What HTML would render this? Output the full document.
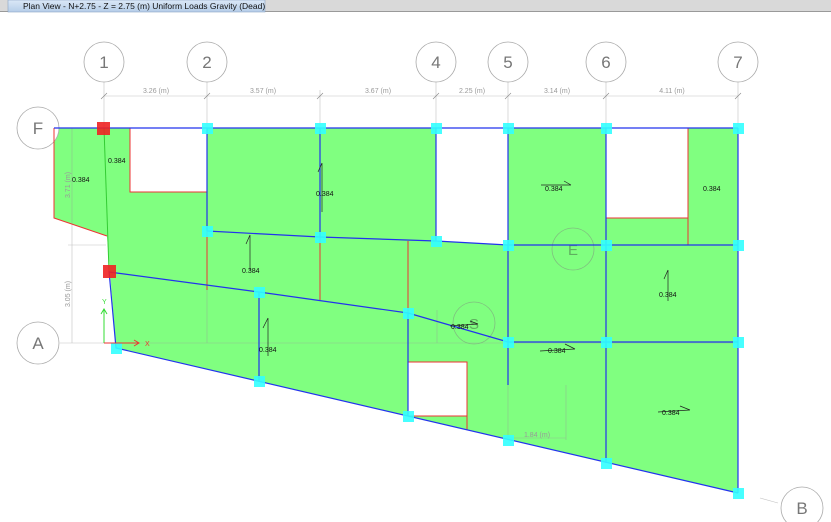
<!DOCTYPE html>
<html><head><style>
html,body{margin:0;padding:0;background:#fff;width:831px;height:522px;overflow:hidden}
svg{display:block}
text{font-family:"Liberation Sans",sans-serif}
</style></head><body>
<svg width="831" height="522" viewBox="0 0 831 522" xmlns="http://www.w3.org/2000/svg">
<defs><linearGradient id="tg" x1="0" y1="0" x2="0" y2="1"><stop offset="0" stop-color="#dbe8f7"/><stop offset="1" stop-color="#b5cde8"/></linearGradient></defs>
<rect x="0" y="0" width="831" height="11" fill="#d9d9d9"/>
<rect x="0" y="11" width="831" height="1" fill="#9a9a9a"/>
<rect x="8" y="0" width="257" height="12" fill="url(#tg)" stroke="#8aa4c4" stroke-width="0.6"/>
<text x="23" y="9" font-size="8.5" fill="#111">Plan View - N+2.75 - Z = 2.75 (m)  Uniform Loads Gravity  (Dead)</text>

<!-- green slab -->
<polygon points="54,128 738,128 738,493 116,348 110,272 107,236 54,218" fill="#80ff80"/>
<rect x="130" y="128" width="77" height="64" fill="#fff"/>
<polygon points="436,128 508,128 508,245 436,241" fill="#fff"/>
<rect x="606" y="128" width="82" height="90" fill="#fff"/>
<rect x="408" y="362" width="59" height="54" fill="#fff"/>

<!-- faint grid lines -->
<g stroke="#999" stroke-width="0.6" fill="none" opacity="0.6">
<line x1="104" y1="82" x2="104" y2="128"/>
<line x1="207" y1="82" x2="207" y2="128"/>
<line x1="320" y1="90" x2="320" y2="128"/>
<line x1="436" y1="82" x2="436" y2="128"/>
<line x1="508" y1="82" x2="508" y2="128"/>
<line x1="606" y1="82" x2="606" y2="128"/>
<line x1="738" y1="82" x2="738" y2="128"/>
<line x1="104" y1="96" x2="738" y2="96"/>
<line x1="72" y1="128" x2="72" y2="343"/>
<line x1="68" y1="245" x2="106" y2="245"/>
<line x1="60" y1="343" x2="738" y2="343"/>
<line x1="207" y1="290" x2="207" y2="343"/>
<line x1="437" y1="310" x2="437" y2="343"/>
<line x1="508" y1="385" x2="508" y2="438"/>
<line x1="566" y1="385" x2="566" y2="440"/>
<line x1="508" y1="438" x2="566" y2="438"/>
<line x1="760" y1="498" x2="778" y2="503"/>
</g>
<g stroke="#888" stroke-width="0.6">
<line x1="101" y1="99" x2="107" y2="93"/><line x1="204" y1="99" x2="210" y2="93"/><line x1="317" y1="99" x2="323" y2="93"/><line x1="433" y1="99" x2="439" y2="93"/><line x1="505" y1="99" x2="511" y2="93"/><line x1="603" y1="99" x2="609" y2="93"/><line x1="735" y1="99" x2="741" y2="93"/>
</g>
<g font-size="7" fill="#999" text-anchor="middle">
<text x="156" y="93">3.26 (m)</text><text x="263" y="93">3.57 (m)</text><text x="378" y="93">3.67 (m)</text><text x="472" y="93">2.25 (m)</text><text x="557" y="93">3.14 (m)</text><text x="672" y="93">4.11 (m)</text>
<text x="537" y="437">1.84 (m)</text>
<text transform="translate(70,185) rotate(-90)">3.71 (m)</text>
<text transform="translate(70,294) rotate(-90)">3.05 (m)</text>
</g>

<!-- grid bubbles -->
<g fill="#fff" stroke="#aaa" stroke-width="0.8">
<circle cx="104" cy="62" r="20"/><circle cx="207" cy="62" r="20"/><circle cx="436" cy="62" r="20"/><circle cx="508" cy="62" r="20"/><circle cx="606" cy="62" r="20"/><circle cx="738" cy="62" r="20"/>
<circle cx="38" cy="128" r="21"/><circle cx="38" cy="343" r="21"/><circle cx="802" cy="508" r="21"/>
</g>
<g fill="none" stroke="#7fbf7f" stroke-width="0.8"><circle cx="573" cy="249" r="21"/><circle cx="474" cy="323" r="21"/></g>
<g font-size="17" fill="#777" text-anchor="middle">
<text x="104" y="68">1</text><text x="207" y="68">2</text><text x="436" y="68">4</text><text x="508" y="68">5</text><text x="606" y="68">6</text><text x="738" y="68">7</text>
<text x="38" y="134">F</text><text x="38" y="349">A</text><text x="802" y="514">B</text>
</g>
<g font-size="15" fill="#5fae5f" text-anchor="middle"><text x="573" y="255">E</text><text x="474" y="329">S</text></g>

<!-- red edges -->
<g stroke="#ee3333" stroke-width="1" fill="none">
<polyline points="54,128 54,218 107,236"/>
<polyline points="130,128 130,192 207,192"/>
<line x1="207" y1="231" x2="207" y2="290"/>
<line x1="320" y1="237" x2="320" y2="300"/>
<line x1="408" y1="241" x2="408" y2="313"/>
<polyline points="606,218 688,218 688,128"/>
<line x1="688" y1="218" x2="688" y2="245"/>
<polyline points="408,362 467,362 467,430"/>
<line x1="408" y1="416" x2="467" y2="416"/>
</g>
<line x1="104" y1="128" x2="109" y2="271" stroke="#33cc33" stroke-width="1"/>

<!-- blue beams -->
<g stroke="#2233ee" stroke-width="1.2" fill="none">
<line x1="54" y1="128" x2="738" y2="128"/>
<line x1="738" y1="128" x2="738" y2="493"/>
<polyline points="109,271 116,348 738,493"/>
<line x1="207" y1="128" x2="207" y2="231"/>
<line x1="320" y1="128" x2="320" y2="237"/>
<line x1="436" y1="128" x2="436" y2="241"/>
<line x1="508" y1="128" x2="508" y2="385"/>
<line x1="606" y1="128" x2="606" y2="463"/>
<polyline points="207,231 320,237 436,241 508,245 738,245"/>
<polyline points="109,272 259,292 408,313 508,342 738,342"/>
<line x1="259" y1="292" x2="259" y2="381"/>
<line x1="408" y1="313" x2="408" y2="416"/>
</g>

<!-- columns -->
<g fill="#33ffff" opacity="0.9">
<rect x="202" y="123" width="11" height="11"/><rect x="315" y="123" width="11" height="11"/><rect x="431" y="123" width="11" height="11"/><rect x="503" y="123" width="11" height="11"/><rect x="601" y="123" width="11" height="11"/><rect x="733" y="123" width="11" height="11"/>
<rect x="202" y="226" width="11" height="11"/><rect x="315" y="232" width="11" height="11"/><rect x="431" y="236" width="11" height="11"/><rect x="503" y="240" width="11" height="11"/><rect x="601" y="240" width="11" height="11"/><rect x="733" y="240" width="11" height="11"/>
<rect x="254" y="287" width="11" height="11"/><rect x="403" y="308" width="11" height="11"/><rect x="503" y="337" width="11" height="11"/><rect x="601" y="337" width="11" height="11"/><rect x="733" y="337" width="11" height="11"/>
<rect x="111" y="343" width="11" height="11"/><rect x="254" y="376" width="11" height="11"/><rect x="403" y="411" width="11" height="11"/><rect x="503" y="435" width="11" height="11"/><rect x="601" y="458" width="11" height="11"/><rect x="733" y="488" width="11" height="11"/>
</g>
<rect x="97" y="122" width="13" height="13" fill="#ee2222" opacity="0.9"/>
<rect x="103" y="265" width="13" height="13" fill="#ee2222" opacity="0.9"/>

<!-- axes -->
<g stroke-width="1" fill="none">
<line x1="104" y1="343" x2="104" y2="310" stroke="#33dd33"/><polyline points="101,314 104,309 107,314" stroke="#33dd33"/>
<line x1="104" y1="343" x2="139" y2="343" stroke="#ee3333"/><polyline points="134,340 139,343 134,346" stroke="#ee3333"/>
</g>
<text x="102" y="304" font-size="7" fill="#33dd33">Y</text>
<text x="145" y="346" font-size="7" fill="#ee3333">X</text>

<!-- load arrows -->
<g stroke="#222" stroke-width="0.7" fill="none">
<path d="M322,163 L322,212 M318,172 L322,163"/>
<path d="M250,235 L250,270 M246,244 L250,235"/>
<path d="M268,318 L268,356 M263,328 L268,318"/>
<path d="M668,270 L668,301 M664,279 L668,270"/>
<path d="M541,185 L571,185 M564,181 L571,185"/>
<path d="M540,351 L575,349 M565,344 L575,349"/>
<path d="M658,412 L690,410 M680,406 L690,410"/>
<path d="M450,326 L478,324 M470,321 L478,324"/>
</g>
<g font-size="7" fill="#111">
<text x="108" y="163">0.384</text>
<text x="72" y="182">0.384</text>
<text x="316" y="196">0.384</text>
<text x="242" y="273">0.384</text>
<text x="259" y="352">0.384</text>
<text x="545" y="191">0.384</text>
<text x="703" y="191">0.384</text>
<text x="659" y="297">0.384</text>
<text x="451" y="329">0.384</text>
<text x="548" y="353">0.384</text>
<text x="662" y="415">0.384</text>
</g>
</svg>
</body></html>
